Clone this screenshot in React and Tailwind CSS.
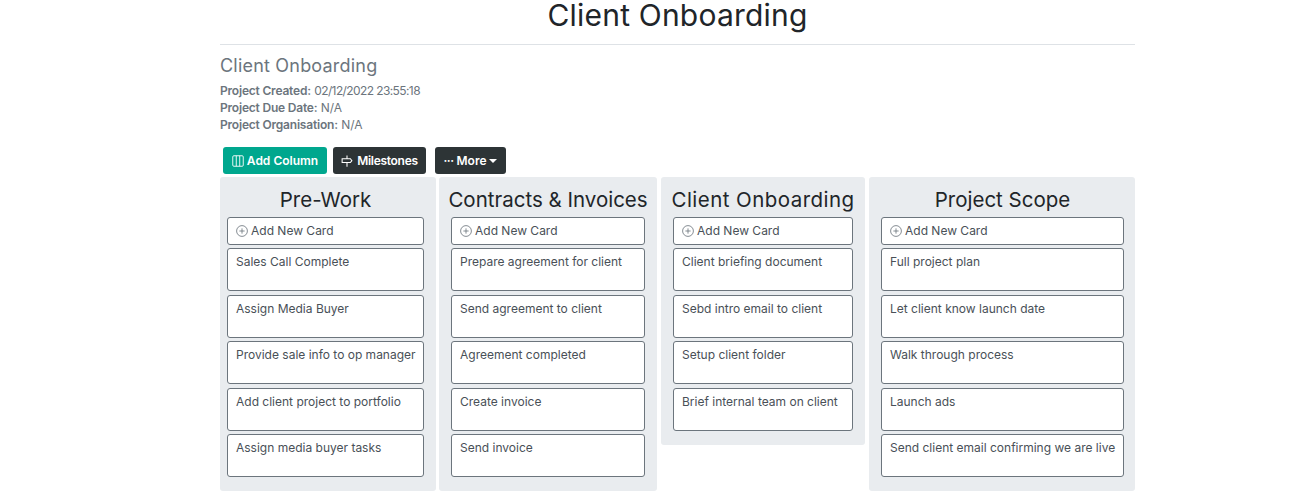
import React from 'react';

const columns = [
  { title: 'Pre-Work', width: 'w-[216px]', inner: 'pl-[7px] pr-[12px]', titleClass: '', cards: ['Sales Call Complete', 'Assign Media Buyer', 'Provide sale info to op manager', 'Add client project to portfolio', 'Assign media buyer tasks'] },
  { title: 'Contracts & Invoices', width: 'w-[218px]', inner: 'px-[12px]', titleClass: '', cards: ['Prepare agreement for client', 'Send agreement to client', 'Agreement completed', 'Create invoice', 'Send invoice'] },
  { title: 'Client Onboarding', width: 'w-[204px]', inner: 'px-[12px]', titleClass: 'tracking-[0.450px]', cards: ['Client briefing document', 'Sebd intro email to client', 'Setup client folder', 'Brief internal team on client'] },
  { title: 'Project Scope', width: 'w-[266px]', inner: 'pl-[12px] pr-[11px]', titleClass: '', cards: ['Full project plan', 'Let client know launch date', 'Walk through process', 'Launch ads', 'Send client email confirming we are live'] },
];

function ColumnsIcon() {
  return (
    <svg width="12" height="12" viewBox="0 0 16 16" fill="none" stroke="currentColor" strokeWidth="1.2">
      <rect x="1" y="1" width="14" height="14" rx="1.5" />
      <path d="M5.700 1v14M10.300 1v14" />
    </svg>
  );
}

function SignpostIcon() {
  return (
    <svg width="12" height="12" viewBox="0 0 16 16" fill="none" stroke="currentColor" strokeWidth="1.400">
      <path d="M8 0.500v4.500M8 10V15.500M1.500 5h11l2 2.500-2 2.500h-11z" />
    </svg>
  );
}

function PlusCircle() {
  return (
    <svg width="12" height="12" viewBox="0 0 16 16" fill="none" stroke="#6c757d" strokeWidth="1.100">
      <circle cx="8" cy="8" r="7.200" />
      <path d="M8 4.500v7M4.500 8h7" />
    </svg>
  );
}

function Column({ column }) {
  return (
    <div className={`${column.width} shrink-0 self-start bg-[#e9ecef] rounded-[3px] pt-[6px] pb-[14px] ${column.inner}`}>
      <div className="flex justify-center mb-[1px] whitespace-nowrap">
        <h3 className={`text-[20.500px] leading-[33px] text-[#212529] ${column.titleClass}`}>{column.title}</h3>
      </div>
      <div className="h-[28px] mb-[3px] bg-white border border-[#6c757d] rounded-[3px] px-[8px] flex items-center gap-[3px] text-[12px] text-[#495057]">
        <PlusCircle />
        <span>Add New Card</span>
      </div>
      {column.cards.map((card) => (
        <div key={card} className="h-[43px] mb-[3.500px] last:mb-0 bg-white border border-[#6c757d] rounded-[3px] px-[8px] pt-[4px] text-[12px] leading-[18px] text-[#495057] whitespace-nowrap">
          {card}
        </div>
      ))}
    </div>
  );
}

export default function App() {
  return (
    <div className="w-[1300px] h-[500px] overflow-hidden bg-white font-['Inter','Liberation_Sans',sans-serif]">
      <div className="w-[915px] ml-[220px]">
        <h1 className="text-[30px] leading-[31px] text-[#212529] text-center pb-[13px] border-b border-[#dee2e6] tracking-[0.2px]">Client Onboarding</h1>
        <h4 className="text-[18px] leading-[22px] text-[#6c757d] mt-[10px] tracking-[0.2px]">Client Onboarding</h4>
        <div className="mt-[5px] text-[12px] leading-[17px] text-[#6c757d]">
          <div><b className="font-semibold tracking-[-0.200px]">Project Created:</b> <span className="tracking-[-0.600px]">02/12/2022 23:55:18</span></div>
          <div><b className="font-semibold tracking-[-0.200px]">Project Due Date:</b> N/A</div>
          <div><b className="font-semibold tracking-[-0.200px]">Project Organisation:</b> N/A</div>
        </div>
        <div className="flex mt-[14px] ml-[3px] text-[12px] font-semibold text-white">
          <div className="w-[104px] h-[27px] bg-[#00a78e] rounded-[3px] flex items-center justify-center gap-[3px]"><ColumnsIcon />Add Column</div>
          <div className="w-[93px] h-[27px] ml-[6px] bg-[#2d3436] rounded-[3px] flex items-center justify-center gap-[4px] tracking-[-0.300px]"><SignpostIcon />Milestones</div>
          <div className="w-[71px] h-[27px] ml-[9px] bg-[#2d3436] rounded-[3px] flex items-center justify-center gap-[3px]">
            <span className="tracking-[-0.500px] leading-none">···</span>
            <span>More</span>
            <span className="w-0 h-0 border-x-[4px] border-x-transparent border-t-[4px] border-t-white" />
          </div>
        </div>
        <div className="flex mt-[3px]">
          <Column column={columns[0]} />
          <div className="w-[3px] shrink-0" />
          <Column column={columns[1]} />
          <div className="w-[4px] shrink-0" />
          <Column column={columns[2]} />
          <div className="w-[4px] shrink-0" />
          <Column column={columns[3]} />
        </div>
      </div>
    </div>
  );
}
